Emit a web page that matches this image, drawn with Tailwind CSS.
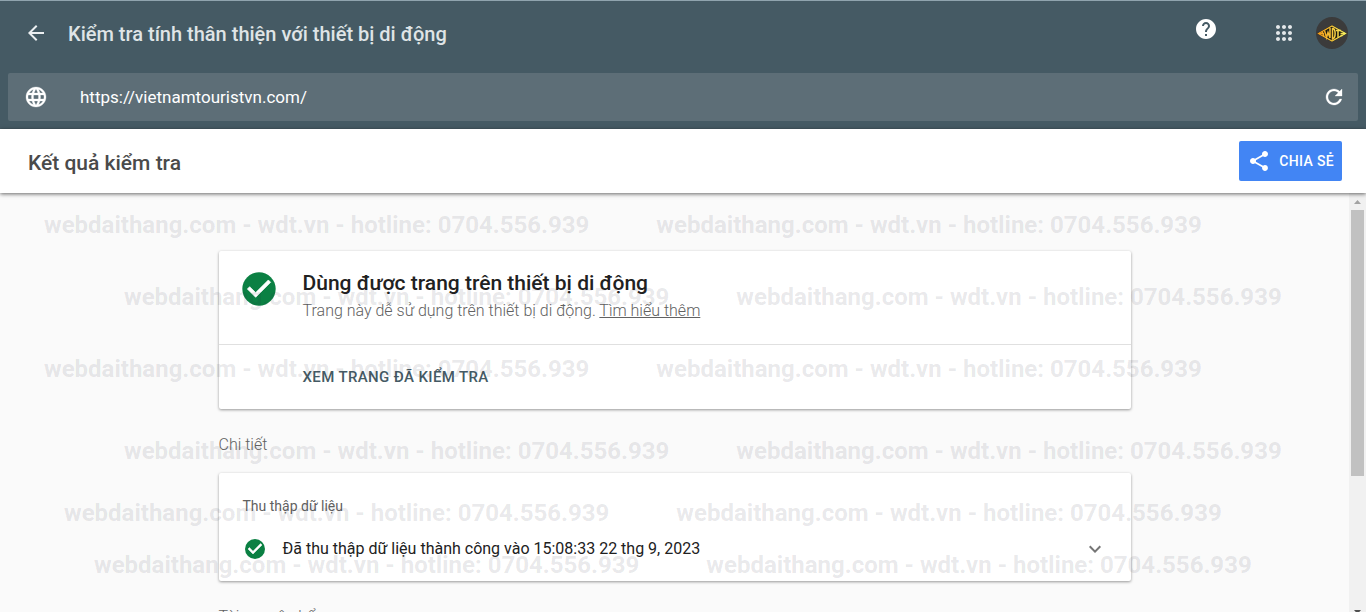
<!DOCTYPE html>
<html lang="vi">
  <head>
    <meta charset="UTF-8" />
    <meta name="viewport" content="width=device-width, initial-scale=1.0" />
    <title>Kiểm tra tính thân thiện với thiết bị di động</title>
    <script src="https://cdn.jsdelivr.net/npm/@tailwindcss/browser@4"></script>
  </head>

  <body class="flex h-screen flex-col overflow-hidden bg-[#fafafa] font-[Roboto,sans-serif] text-[#212121]">
    <!-- Header -->
    <header class="border-t border-[#90a4ae] bg-[#455a64] px-2 pb-2 text-white">
      <div class="flex h-[72px] items-start">
        <a href="#" aria-label="Quay lại" class="mt-5 ml-4 text-[#eceff1]">
          <svg class="size-6" viewBox="0 0 24 24" fill="currentColor"><path d="M20 11H7.83l5.59-5.59L12 4l-8 8 8 8 1.41-1.41L7.83 13H20v-2z" /></svg>
        </a>
        <h1 class="mt-4 ml-5 flex-1 text-xl leading-[34px] font-medium text-[#dfe4e6]">Kiểm tra tính thân thiện với thiết bị di động</h1>
        <button type="button" aria-label="Trợ giúp" class="mt-4">
          <svg class="size-6" viewBox="0 0 24 24" fill="currentColor"><path d="M12 2C6.48 2 2 6.48 2 12s4.48 10 10 10 10-4.48 10-10S17.52 2 12 2zm1 17h-2v-2h2v2zm2.07-7.75l-.9.92C13.45 12.9 13 13.5 13 15h-2v-.5c0-1.1.45-2.1 1.17-2.83l1.24-1.26c.37-.36.59-.86.59-1.41 0-1.1-.9-2-2-2s-2 .9-2 2H8c0-2.21 1.79-4 4-4s4 1.79 4 4c0 .88-.36 1.68-.93 2.25z" /></svg>
        </button>
        <button type="button" aria-label="Ứng dụng" class="mt-5 ml-[54px] text-[#e4e8ea]">
          <svg class="size-6" viewBox="0 0 24 24" fill="currentColor"><path d="M6 8c1.1 0 2-.9 2-2s-.9-2-2-2-2 .9-2 2 .9 2 2 2zm6 12c1.1 0 2-.9 2-2s-.9-2-2-2-2 .9-2 2 .9 2 2 2zm-6 0c1.1 0 2-.9 2-2s-.9-2-2-2-2 .9-2 2 .9 2 2 2zm0-6c1.1 0 2-.9 2-2s-.9-2-2-2-2 .9-2 2 .9 2 2 2zm6 0c1.1 0 2-.9 2-2s-.9-2-2-2-2 .9-2 2 .9 2 2 2zm4-8c0 1.1.9 2 2 2s2-.9 2-2-.9-2-2-2-2 .9-2 2zm-4 2c1.1 0 2-.9 2-2s-.9-2-2-2-2 .9-2 2 .9 2 2 2zm6 6c1.1 0 2-.9 2-2s-.9-2-2-2-2 .9-2 2 .9 2 2 2zm0 6c1.1 0 2-.9 2-2s-.9-2-2-2-2 .9-2 2 .9 2 2 2z" /></svg>
        </button>
        <button type="button" aria-label="Tài khoản" class="mt-4 mr-2.5 ml-5">
          <svg class="size-8" viewBox="0 0 32 32">
            <defs>
              <linearGradient id="gold" gradientUnits="userSpaceOnUse" x1="2" y1="0" x2="30" y2="0"><stop offset="0" stop-color="#f39a17" /><stop offset="1" stop-color="#f6f060" /></linearGradient>
            </defs>
            <circle cx="16" cy="16" r="16" fill="#3b3b3b" />
            <path d="M1 16.500L16 8l15 8.500L16 25z" fill="#17170f" />
            <g fill="none" stroke="url(#gold)">
              <path d="M2.500 16.500L16 9l13.500 7.500L16 24z" stroke-width="1.300" />
              <path d="M3 16.500h5M6 14.500l2 5M8.500 13.500l2 7 1.500-5 2 5.500V11M16.500 11v11c3.500-1 3.500-10 0-11M20 13.500h5M22 14v6.500M24.500 16.500H29M24.500 18.500h2" stroke-width="1.500" />
            </g>
          </svg>
        </button>
      </div>
      <form class="flex h-12 items-center rounded-xs bg-[#5d6e77] px-4">
        <label for="url" aria-label="URL">
          <svg class="size-6" viewBox="0 0 24 24" fill="currentColor" stroke="currentColor" stroke-width="0.3"><path d="M11.990 2C6.470 2 2 6.480 2 12s4.470 10 9.990 10C17.520 22 22 17.520 22 12S17.520 2 11.990 2zm6.930 6h-2.950c-.320-1.250-.780-2.450-1.380-3.560 1.840.630 3.370 1.910 4.330 3.560zM12 4.040c.830 1.200 1.480 2.530 1.910 3.960h-3.820c.430-1.430 1.080-2.760 1.910-3.960zM4.260 14C4.100 13.360 4 12.690 4 12s.100-1.360.260-2h3.380c-.080.660-.140 1.320-.140 2 0 .680.060 1.340.140 2H4.260zm.820 2h2.950c.320 1.250.780 2.450 1.380 3.560-1.840-.630-3.370-1.900-4.330-3.560zm2.950-8H5.080c.960-1.660 2.490-2.930 4.330-3.560C8.810 5.550 8.350 6.750 8.030 8zM12 19.960c-.830-1.200-1.480-2.530-1.910-3.960h3.820c-.430 1.430-1.080 2.760-1.910 3.960zM14.340 14H9.660c-.090-.660-.160-1.320-.160-2 0-.680.070-1.350.160-2h4.680c.090.650.160 1.320.160 2 0 .680-.070 1.340-.160 2zm.250 5.560c.600-1.110 1.060-2.310 1.380-3.560h2.950c-.960 1.650-2.490 2.930-4.330 3.560zM16.360 14c.080-.660.140-1.320.140-2 0-.680-.060-1.340-.140-2h3.380c.160.640.260 1.310.260 2s-.100 1.360-.260 2h-3.380z" /></svg>
        </label>
        <input id="url" type="url" value="https://vietnamtouristvn.com/" class="ml-8 flex-1 text-[17px] leading-6 text-white outline-none" />
        <button type="button" aria-label="Kiểm tra lại" class="-mr-1">
          <svg class="size-6" viewBox="0 0 24 24" fill="currentColor" stroke="currentColor" stroke-width="0.3"><path d="M17.650 6.350C16.200 4.900 14.210 4 12 4c-4.420 0-7.990 3.580-7.990 8s3.570 8 7.990 8c3.730 0 6.840-2.550 7.730-6h-2.080c-.820 2.330-3.040 4-5.650 4-3.310 0-6-2.690-6-6s2.690-6 6-6c1.660 0 3.140.690 4.220 1.780L13 11h7V4l-2.350 2.350z" /></svg>
        </button>
      </form>
    </header>

    <!-- Result bar -->
    <div class="z-10 flex h-16 shrink-0 items-center justify-between bg-white pr-6 pl-7 shadow-[0_1px_4px_rgba(0,0,0,0.6)]">
      <h2 class="pt-1 text-[21px] leading-8 font-medium text-[#4a4a4a]">Kết quả kiểm tra</h2>
      <button type="button" class="flex h-10 items-center gap-2 rounded-xs bg-[#4285f4] px-2 text-sm font-medium tracking-wide text-white">
        <svg class="size-6" viewBox="0 0 24 24" fill="currentColor"><path d="M18 16.080c-.760 0-1.440.300-1.960.770L8.910 12.700c.050-.230.090-.460.090-.700s-.040-.470-.090-.700l7.050-4.110c.540.500 1.250.810 2.040.810 1.660 0 3-1.340 3-3s-1.340-3-3-3-3 1.340-3 3c0 .240.040.470.090.700L8.040 9.810C7.500 9.310 6.790 9 6 9c-1.660 0-3 1.340-3 3s1.340 3 3 3c.790 0 1.500-.310 2.040-.810l7.120 4.160c-.050.210-.080.430-.080.650 0 1.610 1.310 2.920 2.920 2.920s2.920-1.310 2.920-2.920-1.310-2.920-2.920-2.920z" /></svg>
        CHIA SẺ
      </button>
    </div>

    <div class="relative flex min-h-0 flex-1">
      <main class="flex-1 overflow-hidden pt-[58px]">
        <div class="mx-auto max-w-[912px]">
          <section class="rounded-xs bg-white shadow-[0_1px_3px_rgba(0,0,0,0.4)]">
            <div class="flex h-[94px] items-start gap-6 border-b border-[#e0e0e0] pt-4 pl-5">
              <svg class="mt-0.5 size-10" viewBox="0 0 24 24"><circle cx="12" cy="12" r="10" fill="#0b8043" /><path d="M10 17l-5-5 1.410-1.410L10 14.170l7.590-7.590L19 8l-9 9z" fill="#fff" stroke="#fff" stroke-width="0.4" /></svg>
              <div>
                <h3 class="text-[21px] leading-8 font-medium">Dùng được trang trên thiết bị di động</h3>
                <p class="text-base font-light text-[#616161]">Trang này dễ sử dụng trên thiết bị di động. <a href="#" class="underline">Tìm hiểu thêm</a></p>
              </div>
            </div>
            <div class="flex h-16 items-center pl-[84px]">
              <button type="button" class="text-[15px] leading-5 font-medium tracking-wide text-[#455a64]">XEM TRANG ĐÃ KIỂM TRA</button>
            </div>
          </section>

          <h4 class="mt-6 text-base font-light text-[#616161]">Chi tiết</h4>
          <section class="mt-4 h-[108px] rounded-xs bg-white px-6 pt-[23px] shadow-[0_1px_3px_rgba(0,0,0,0.4)]">
            <h5 class="text-sm text-[#616161]">Thu thập dữ liệu</h5>
            <div class="mt-[21px] flex items-center gap-4">
              <svg class="size-6" viewBox="0 0 24 24"><circle cx="12" cy="12" r="10" fill="#0b8043" /><path d="M10 17l-5-5 1.410-1.410L10 14.170l7.590-7.590L19 8l-9 9z" fill="#fff" stroke="#fff" stroke-width="0.5" /></svg>
              <p class="flex-1 text-base">Đã thu thập dữ liệu thành công vào 15:08:33 22 thg 9, 2023</p>
              <button type="button" aria-label="Mở rộng" class="text-[#757575]">
                <svg class="size-6" viewBox="0 0 24 24" fill="currentColor"><path d="M7.410 8.590L12 13.170l4.590-4.580L18 10l-6 6-6-6 1.410-1.410z" /></svg>
              </button>
            </div>
          </section>

          <h4 class="mt-6 text-base font-light text-[#616161]">Tài nguyên bổ sung</h4>
        </div>
      </main>

      <!-- Scrollbar -->
      <div class="flex w-[17px] flex-col items-center bg-[#f1f1f1]">
        <svg class="h-[17px] w-[17px]" viewBox="0 0 17 17" fill="#a3a3a3"><path d="M5 11h7L8.500 7z" /></svg>
        <div class="h-[266px] w-[13px] bg-[#c1c1c1]"></div>
        <svg class="mt-auto h-[17px] w-[17px] translate-y-2" viewBox="0 0 17 17" fill="#505050"><path d="M5 7h7l-3.500 4z" /></svg>
      </div>

      <!-- Watermark -->
      <div class="pointer-events-none absolute inset-0 overflow-hidden pt-4 text-2xl leading-8 font-bold whitespace-nowrap text-[#28283c]/11">
        <div class="flex gap-[67px] pl-11"><span>webdaithang.com - wdt.vn - hotline: 0704.556.939</span><span>webdaithang.com - wdt.vn - hotline: 0704.556.939</span></div>
        <div class="mt-10 flex gap-[67px] pl-31"><span>webdaithang.com - wdt.vn - hotline: 0704.556.939</span><span>webdaithang.com - wdt.vn - hotline: 0704.556.939</span></div>
        <div class="mt-10 flex gap-[67px] pl-11"><span>webdaithang.com - wdt.vn - hotline: 0704.556.939</span><span>webdaithang.com - wdt.vn - hotline: 0704.556.939</span></div>
        <div class="mt-[50px] flex gap-[67px] pl-31"><span>webdaithang.com - wdt.vn - hotline: 0704.556.939</span><span>webdaithang.com - wdt.vn - hotline: 0704.556.939</span></div>
        <div class="mt-[30px] flex gap-[67px] pl-16"><span>webdaithang.com - wdt.vn - hotline: 0704.556.939</span><span>webdaithang.com - wdt.vn - hotline: 0704.556.939</span></div>
        <div class="mt-5 flex gap-[67px] pl-[94px]"><span>webdaithang.com - wdt.vn - hotline: 0704.556.939</span><span>webdaithang.com - wdt.vn - hotline: 0704.556.939</span></div>
      </div>
    </div>
  </body>
</html>
